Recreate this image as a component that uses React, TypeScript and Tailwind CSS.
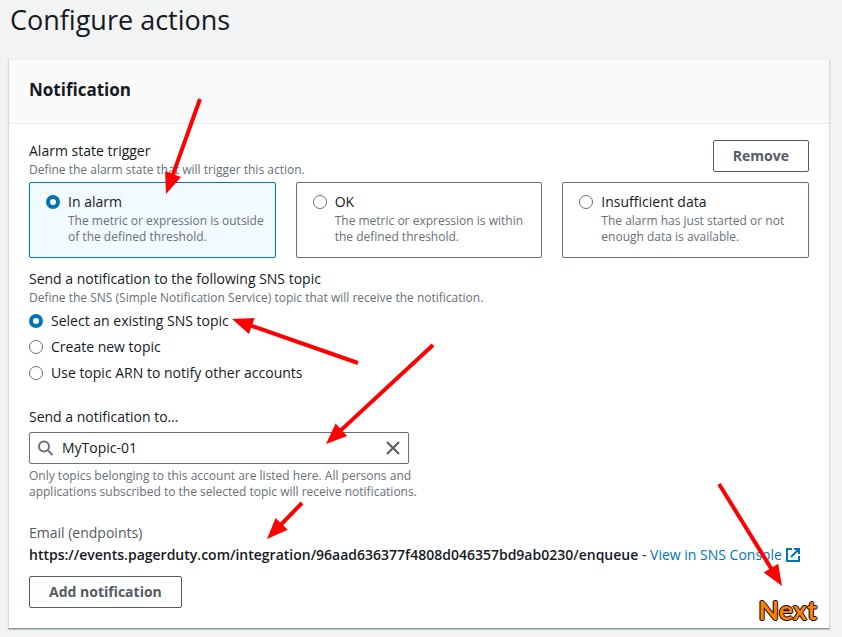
import { useState } from "react";

const triggers = [
  { id: "alarm", title: "In alarm", text: "The metric or expression is outside of the defined threshold." },
  { id: "ok", title: "OK", text: "The metric or expression is within the defined threshold." },
  { id: "insufficient", title: "Insufficient data", text: "The alarm has just started or not enough data is available." },
];

const targets = [
  { id: "existing", title: "Select an existing SNS topic" },
  { id: "create", title: "Create new topic" },
  { id: "arn", title: "Use topic ARN to notify other accounts" },
];

const radioClass =
  "m-0 size-3.5 shrink-0 appearance-none rounded-full border border-[#687078] bg-white checked:border-4 checked:border-[#0073bb]";

const buttonClass =
  "h-8 shrink-0 rounded-xs border border-[#545b64] bg-white px-[19px] text-sm font-bold text-[#545b64]";

type Point = [number, number];

function Arrow({ from, to }: { from: Point; to: Point }) {
  const dx = to[0] - from[0];
  const dy = to[1] - from[1];
  const len = Math.hypot(dx, dy);
  const angle = (Math.atan2(dy, dx) * 180) / Math.PI;
  return (
    <g transform={`translate(${from[0]} ${from[1]}) rotate(${angle})`} fill="#ff0000">
      <path d={`M0 -2H${len - 19}V2H0Z`} />
      <path d={`M${len} 0L${len - 21} -8.5V8.5Z`} />
    </g>
  );
}

export default function App() {
  const [trigger, setTrigger] = useState("alarm");
  const [target, setTarget] = useState("existing");
  const [topic, setTopic] = useState("MyTopic-01");

  return (
    <div className="relative min-h-screen bg-[#f2f3f3] pr-3 pb-2 pl-2 font-['Open_Sans','Noto_Sans',sans-serif] text-sm leading-[22px] text-[#16191f]">
      <h1 className="h-[59px] pl-0.5 text-[27px] leading-10 font-normal">Configure actions</h1>

      <section className="relative border border-t-[#eaeded] border-r-[#d5dbdb] border-b-[#879596] border-l-[#d5dbdb] bg-white shadow-[0_1px_1px_0_rgba(0,28,36,0.2)]">
        <header className="border-b border-[#eaeded] bg-[#fafafa] px-5 pt-[18px] pb-[22px]">
          <h2 className="text-[17px] leading-[23px] font-bold">Notification</h2>
        </header>

        <div className="px-5 pt-4 pb-5">
          <fieldset>
            <div className="flex items-start justify-between">
              <div>
                <p>Alarm state trigger</p>
                <p className="text-xs leading-4 text-[#687078]">Define the alarm state that will trigger this action.</p>
              </div>
              <button type="button" className={buttonClass}>Remove</button>
            </div>
            <div className="mt-1 grid grid-cols-3 gap-5">
              {triggers.map((t) => (
                <label
                  key={t.id}
                  className="flex gap-2 rounded-xs border border-[#687078] bg-white pt-2 pr-2 pb-3 pl-4 has-checked:border-[#0073bb] has-checked:bg-[#f1faff]"
                >
                  <span className="flex h-[22px] items-center">
                    <input type="radio" name="trigger" className={radioClass} checked={trigger === t.id} onChange={() => setTrigger(t.id)} />
                  </span>
                  <span>
                    <span className="block">{t.title}</span>
                    <span className="block text-xs leading-4 text-[#687078]">{t.text}</span>
                  </span>
                </label>
              ))}
            </div>
          </fieldset>

          <fieldset className="mt-2.5">
            <p>Send a notification to the following SNS topic</p>
            <p className="text-xs leading-4 text-[#687078]">
              Define the SNS (Simple Notification Service) topic that will receive the notification.
            </p>
            <div className="mt-1 flex flex-col items-start gap-1">
              {targets.map((t) => (
                <label key={t.id} className="flex items-center gap-2">
                  <input type="radio" name="target" className={radioClass} checked={target === t.id} onChange={() => setTarget(t.id)} />
                  {t.title}
                </label>
              ))}
            </div>
          </fieldset>

          <div className="mt-[22px]">
            <label htmlFor="topic" className="block">Send a notification to…</label>
            <div className="mt-1 flex h-8 max-w-[380px] items-center rounded-xs border border-[#687078] bg-white px-2">
              <svg viewBox="0 0 16 16" className="size-4 shrink-0" fill="none" stroke="#687078" strokeWidth="2">
                <circle cx="6" cy="6.5" r="5" />
                <path d="M9.6 10.1L14.5 15" />
              </svg>
              <input
                id="topic"
                type="text"
                value={topic}
                onChange={(e) => setTopic(e.target.value)}
                className="ml-2 min-w-0 flex-1 bg-transparent outline-none"
              />
              <button type="button" aria-label="Clear" onClick={() => setTopic("")}>
                <svg viewBox="0 0 14 14" className="size-3.5" fill="none" stroke="#545b64" strokeWidth="2">
                  <path d="M1 1L13 13M13 1L1 13" />
                </svg>
              </button>
            </div>
            <p className="mt-1 max-w-[400px] text-xs leading-4 text-[#687078]">
              Only topics belonging to this account are listed here. All persons and applications subscribed to the selected topic will receive notifications.
            </p>
          </div>

          <div className="mt-[22px]">
            <p className="text-[#545b64]">Email (endpoints)</p>
            <p className="whitespace-nowrap">
              <b className="font-semibold">https://events.pagerduty.com/integration/96aad636377f4808d046357bd9ab0230/enqueue</b>
              {" - "}
              <a href="#sns" className="text-[#0073bb]">
                View in SNS Console
                <svg viewBox="0 0 14 14" className="ml-1 inline size-3.5 align-[-2px]" fill="none" stroke="#0073bb" strokeWidth="2">
                  <path d="M6 1H1V13H13V8M8 1H13V6M13 1L5 9" />
                </svg>
              </a>
            </p>
          </div>

          <button type="button" className={`mt-2.5 ${buttonClass}`}>Add notification</button>
        </div>

        <span className="absolute right-3 bottom-1 font-['Lato',sans-serif] text-[27px] leading-7 font-bold text-[#ff8000] [text-shadow:1px_0_#000,-1px_0_#000,0_1px_#000,0_-1px_#000]">
          Next
        </span>
      </section>

      <svg className="pointer-events-none absolute top-0 left-0" width="842" height="637" viewBox="0 0 842 637" aria-hidden="true">
        <Arrow from={[200, 99]} to={[166, 194]} />
        <Arrow from={[358, 363]} to={[232, 319]} />
        <Arrow from={[433, 345]} to={[326, 444]} />
        <Arrow from={[302, 503]} to={[267, 539]} />
        <Arrow from={[719, 484]} to={[782, 586]} />
      </svg>
    </div>
  );
}
